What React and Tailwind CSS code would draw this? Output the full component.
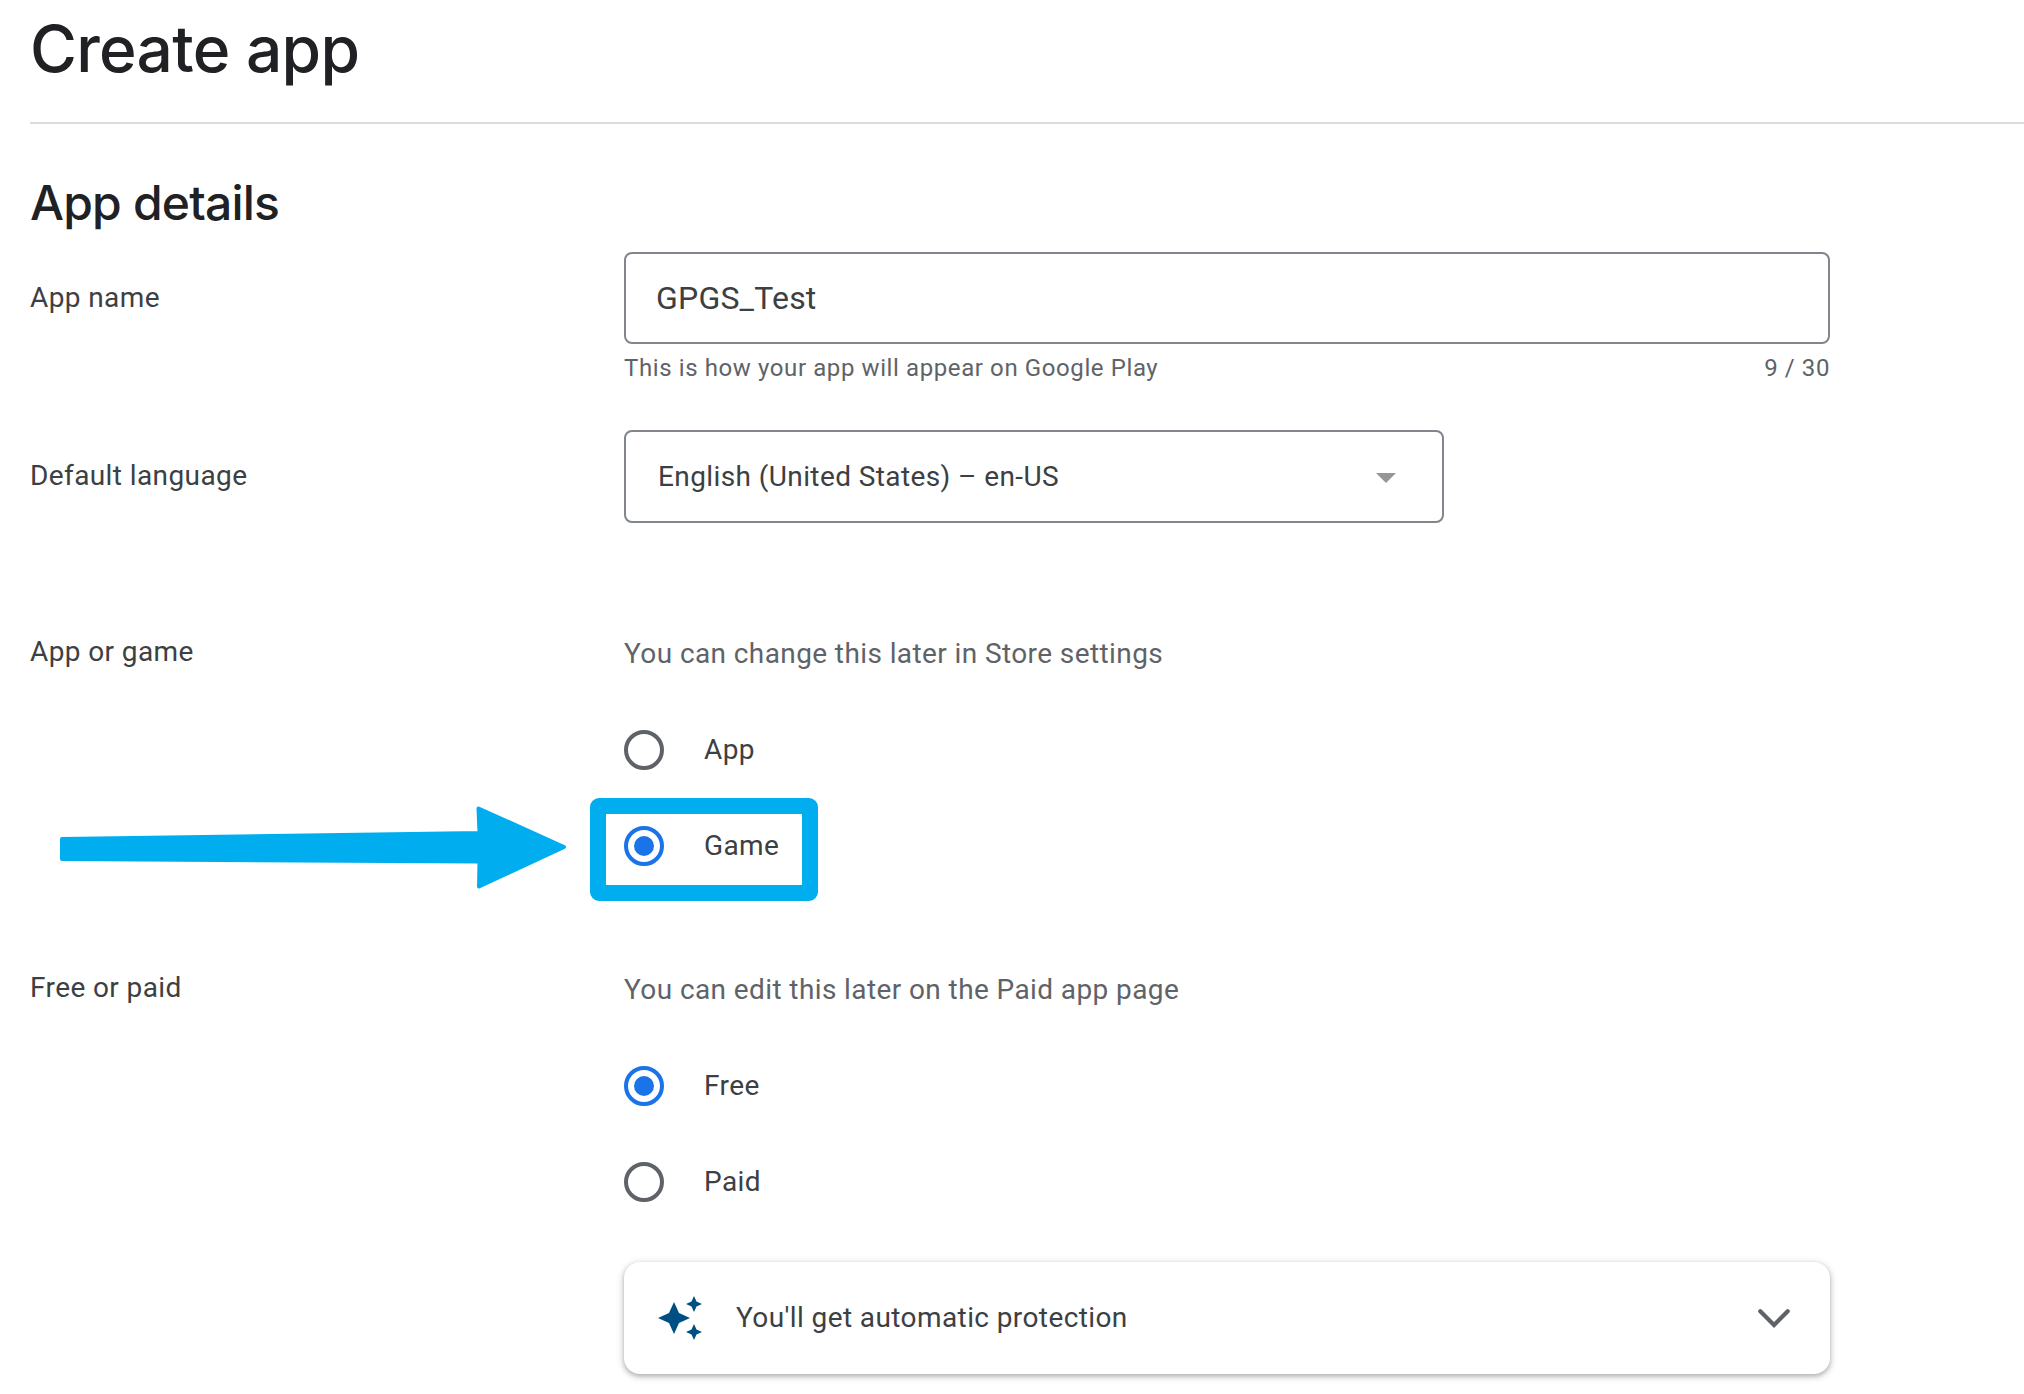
function Row({ label, labelClass, className, children }) {
  return (
    <div className={`grid grid-cols-[594px_1206px] ${className}`}>
      <div className={`leading-10 ${labelClass}`}>{label}</div>
      <div>{children}</div>
    </div>
  );
}

function Radio({ label, checked, children }) {
  return (
    <div className="relative flex h-24 items-center gap-10">
      <span
        className={`flex size-10 items-center justify-center rounded-full border-4 ${
          checked ? "border-[#1a73e8]" : "border-[#5f6368]"
        }`}
      >
        {checked && <span className="size-5 rounded-full bg-[#1a73e8]" />}
      </span>
      <span className="leading-10">{label}</span>
      {children}
    </div>
  );
}

function Highlight() {
  return (
    <>
      <span className="absolute top-0 -left-[34px] h-[103px] w-[228px] rounded-[9px] border-16 border-[#00aeef]" />
      <svg
        className="absolute top-2 -left-[564px] h-[84px] w-[508px]"
        viewBox="60 806 508 84"
        fill="#00aeef"
        stroke="#00aeef"
        strokeWidth="4"
        strokeLinejoin="round"
      >
        <path d="M62 839 L479.5 833 L478.5 808.5 L564 847 L479 886.5 L479.5 861.5 L62 859 Z" />
      </svg>
    </>
  );
}

export default function App() {
  return (
    <main className="h-[1394px] w-full overflow-hidden bg-white pl-[30px] font-['Roboto',sans-serif] text-[28px] tracking-[0.4px] text-[#3c4043]">
      <header className="h-[124px] border-b-2 border-[#dadce0] pt-[9px]">
        <h1 className="font-['Inter',sans-serif] text-[64px] leading-[80px] font-[550] tracking-[-0.7px] text-[#202124]">
          Create app
        </h1>
      </header>
      <h2 className="h-32 pt-[49px] font-['Inter',sans-serif] text-[48px] leading-[60px] font-[550] tracking-[-0.8px] text-[#202124]">
        App details
      </h2>

      <Row label="App name" labelClass="pt-[26px]" className="h-[178px]">
        <div className="flex h-[92px] items-center rounded-lg border-2 border-[#80868b] px-[30px] text-[32px] tracking-[0.2px]">
          GPGS_Test
        </div>
        <div className="flex justify-between pt-1 text-[24px] leading-10 tracking-[0.6px] text-[#5f6368]">
          <span>This is how your app will appear on Google Play</span>
          <span>9 / 30</span>
        </div>
      </Row>

      <Row label="Default language" labelClass="pt-[26px]" className="h-[204px]">
        <div className="flex h-[93px] w-[820px] items-center justify-between rounded-lg border-2 border-[#80868b] pr-[46px] pl-8">
          <span>English (United States) – en-US</span>
          <svg className="mt-0.5 h-2.5 w-5" viewBox="0 0 20 10" fill="#969696">
            <path d="M0 0H20L10 10Z" />
          </svg>
        </div>
      </Row>

      <Row label="App or game" labelClass="-mt-0.5" className="h-[336px]">
        <p className="mb-7 leading-10 text-[#5f6368]">
          You can change this later in Store settings
        </p>
        <Radio label="App" />
        <Radio label="Game" checked>
          <Highlight />
        </Radio>
      </Row>

      <Row label="Free or paid" labelClass="-mt-0.5" className="">
        <p className="mb-7 leading-10 text-[#5f6368]">
          You can edit this later on the Paid app page
        </p>
        <Radio label="Free" checked />
        <Radio label="Paid" />
        <div className="mt-8 flex h-28 items-center rounded-2xl bg-white pr-10 pl-[34px] shadow-[0_2px_4px_0_rgba(60,64,67,0.3),0_2px_6px_2px_rgba(60,64,67,0.15)]">
          <svg className="h-11 w-11" viewBox="1 1 22 22" fill="#004f84">
            <path d="M19 9l1.25-2.75L23 5l-2.75-1.25L19 1l-1.25 2.75L15 5l2.75 1.25L19 9zM11.5 9.5L9 4 6.5 9.5 1 12l5.5 2.5L9 20l2.5-5.5L17 12l-5.5-2.5zM19 15l-1.25 2.75L15 19l2.75 1.25L19 23l1.25-2.75L23 19l-2.75-1.25L19 15z" />
          </svg>
          <span className="ml-[34px] grow leading-10">You'll get automatic protection</span>
          <svg
            className="h-[19px] w-8"
            viewBox="0 0 32 19"
            fill="none"
            stroke="#5f6368"
            strokeWidth="4.2"
            strokeLinecap="round"
          >
            <path d="M2.3 2.3L16 16L29.7 2.3" />
          </svg>
        </div>
      </Row>
    </main>
  );
}
